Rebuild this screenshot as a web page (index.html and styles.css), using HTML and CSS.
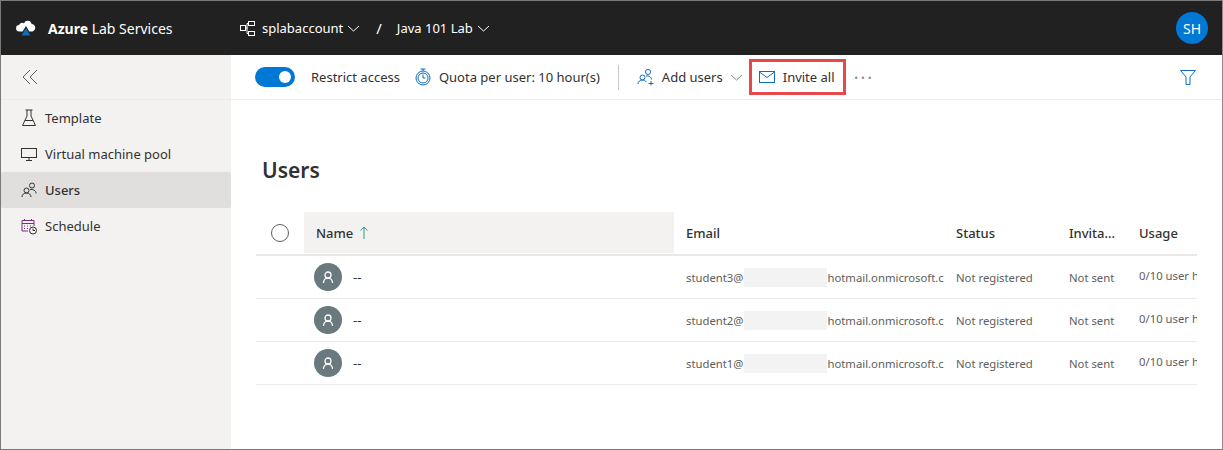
FILE: index.html
```html
<!DOCTYPE html>
<html lang="en">
<head>
  <meta charset="UTF-8">
  <title>Azure Lab Services</title>
  <link rel="stylesheet" href="styles.css">
</head>
<body>
  <div class="frame">
    <header class="topbar">
      <svg class="logo" width="20" height="16" viewBox="0 0 20 16">
        <path d="M3.500 11.500a3.200 3.200 0 0 1-.4-6.400A3.600 3.600 0 0 1 8 3.200 4 4 0 0 1 15.600 4a3.800 3.800 0 0 1 1 7.400l-3.300.1L10 6l-3.400 5.500z" fill="#fff"/>
        <path d="M10 8l4.400 7.500H5.600z" fill="#0f6cbd"/>
      </svg>
      <span class="brand"><b>Azure</b> Lab Services</span>
      <svg class="account-icon" width="15" height="15" viewBox="0 0 15 15" fill="none" stroke="#fff">
        <rect x="8.500" y=".5" width="6" height="4"/><rect x="8.500" y="10.500" width="6" height="4"/><rect x=".5" y="4.500" width="5" height="5"/>
        <path d="M5.500 7h2M7 2.500v10M7 2.500h1.500M7 12.500h1.500"/>
      </svg>
      <span class="crumb">splabaccount</span>
      <svg class="chev" width="13" height="7" viewBox="0 0 13 7" fill="none" stroke="#fff"><path d="M1 1l5.500 5L12 1"/></svg>
      <span class="slash">/</span>
      <span class="crumb">Java 101 Lab</span>
      <svg class="chev" width="13" height="7" viewBox="0 0 13 7" fill="none" stroke="#fff"><path d="M1 1l5.500 5L12 1"/></svg>
      <span class="avatar">SH</span>
    </header>

    <div class="main">
      <nav class="sidebar">
        <div class="collapse">
          <svg width="16" height="16" viewBox="0 0 16 16" fill="none" stroke="#5f5e5c"><path d="M8 1L1 8l7 7M15 1L8 8l7 7"/></svg>
        </div>
        <ul class="nav">
          <li class="nav-item">
            <svg width="16" height="18" viewBox="0 0 16 18" fill="none" stroke="#323130"><path d="M4.500 1h7M6 1v6L1.500 16.500h13L10 7V1M4 11.500h8"/></svg>
            Template
          </li>
          <li class="nav-item">
            <svg width="16" height="16" viewBox="0 0 16 16" fill="none" stroke="#323130"><rect x=".5" y="2.500" width="15" height="9"/><path d="M8 11.500v3M5 14.500h6"/></svg>
            Virtual machine pool
          </li>
          <li class="nav-item active">
            <svg width="16" height="16" viewBox="0 0 16 16" fill="none" stroke="#323130"><circle cx="5.500" cy="8.500" r="2.500"/><circle cx="11" cy="3.500" r="2.500"/><path d="M1 15c0-2.500 2-4 4.500-4s4.500 1.500 4.500 4M9 7.500c3-.5 6 1 6 4"/></svg>
            Users
          </li>
          <li class="nav-item">
            <svg width="16" height="17" viewBox="0 0 16 17" fill="none" stroke="#7a2a86"><path d="M1 2.500h12V8M1 2.500V13h6M1 5.500h12M3.500 1v2M10.500 1v2M3 8h1M6 8h1M9 8h1M3 10.500h1M6 10.500h1"/><circle cx="12" cy="12.500" r="3.500" stroke="#323130"/><path d="M12 10.500v2h2" stroke="#323130"/></svg>
            Schedule
          </li>
        </ul>
      </nav>

      <section class="content">
        <div class="toolbar">
          <span class="toggle"><span class="knob"></span></span>
          <span class="tool restrict">Restrict access</span>
          <svg class="tool-icon quota-icon" width="16" height="18" viewBox="0 0 16 18" fill="none" stroke="#0f6cbd"><circle cx="8" cy="10" r="7"/><circle cx="8" cy="10" r="5"/><path d="M5.500 1h5M8 1v2M8 6.500V10h2.500"/></svg>
          <span class="tool">Quota per user: 10 hour(s)</span>
          <span class="divider"></span>
          <svg class="tool-icon add-icon" width="18" height="18" viewBox="0 0 18 18" fill="none" stroke="#0f6cbd"><circle cx="5.500" cy="9.500" r="2.500"/><circle cx="11" cy="4" r="2.500"/><path d="M1 16c0-2.500 2-4 4.500-4 1.500 0 3 .7 3.700 2M9 8c3-.5 5.500 1 5.500 3.500M14 13v4.500M11.500 15.500h5"/></svg>
          <span class="tool">Add users</span>
          <svg class="add-chev" width="13" height="7" viewBox="0 0 13 7" fill="none" stroke="#8a8886"><path d="M1 1l5.500 5L12 1"/></svg>
          <button class="invite">
            <svg width="16" height="12" viewBox="0 0 16 12" fill="none" stroke="#0f6cbd"><rect x=".5" y=".5" width="15" height="11"/><path d="M.5 1L8 6.500 15.500 1"/></svg>
            Invite all
          </button>
          <span class="more">···</span>
          <svg class="filter" width="16" height="15" viewBox="0 0 16 15" fill="none" stroke="#0f6cbd"><path d="M.5.500h15L10 7v7.500H6V7z"/></svg>
        </div>

        <div class="page">
          <h1 class="title">Users</h1>
          <div class="table">
            <div class="row head">
              <div class="cell col-check"><span class="radio"></span></div>
              <div class="cell col-name sorted">Name
                <svg class="arrow" width="8" height="13" viewBox="0 0 8 13" fill="none" stroke="#2a9d8f"><path d="M4 13V1M.5 4.500L4 1l3.500 3.500"/></svg>
              </div>
              <div class="cell col-email">Email</div>
              <div class="cell col-status">Status</div>
              <div class="cell col-invite">Invita...</div>
              <div class="cell col-usage">Usage</div>
            </div>
            <div class="row">
              <div class="cell col-check"></div>
              <div class="cell col-name">
                <span class="person"><svg width="12" height="13" viewBox="0 0 12 13" fill="none" stroke="#fff" stroke-width="1.300"><circle cx="6" cy="4" r="3"/><path d="M1.500 12c0-3 2-5 4.500-5s4.500 2 4.500 5"/></svg></span>
                --
              </div>
              <div class="cell col-email">student3@<span class="blur"></span>hotmail.onmicrosoft.com</div>
              <div class="cell col-status">Not registered</div>
              <div class="cell col-invite">Not sent</div>
              <div class="cell col-usage"><span class="usage-text">0/10 user hours</span></div>
            </div>
            <div class="row">
              <div class="cell col-check"></div>
              <div class="cell col-name">
                <span class="person"><svg width="12" height="13" viewBox="0 0 12 13" fill="none" stroke="#fff" stroke-width="1.300"><circle cx="6" cy="4" r="3"/><path d="M1.500 12c0-3 2-5 4.500-5s4.500 2 4.500 5"/></svg></span>
                --
              </div>
              <div class="cell col-email">student2@<span class="blur"></span>hotmail.onmicrosoft.com</div>
              <div class="cell col-status">Not registered</div>
              <div class="cell col-invite">Not sent</div>
              <div class="cell col-usage"><span class="usage-text">0/10 user hours</span></div>
            </div>
            <div class="row">
              <div class="cell col-check"></div>
              <div class="cell col-name">
                <span class="person"><svg width="12" height="13" viewBox="0 0 12 13" fill="none" stroke="#fff" stroke-width="1.300"><circle cx="6" cy="4" r="3"/><path d="M1.500 12c0-3 2-5 4.500-5s4.500 2 4.500 5"/></svg></span>
                --
              </div>
              <div class="cell col-email">student1@<span class="blur"></span>hotmail.onmicrosoft.com</div>
              <div class="cell col-status">Not registered</div>
              <div class="cell col-invite">Not sent</div>
              <div class="cell col-usage"><span class="usage-text">0/10 user hours</span></div>
            </div>
          </div>
        </div>
      </section>
    </div>
  </div>
</body>
</html>
```

FILE: styles.css
```css
* {
  box-sizing: border-box;
}

body {
  margin: 0;
  font-family: "Noto Sans", Arial, sans-serif;
  font-size: 13px;
  color: #323130;
  background: #fff;
}

.frame {
  width: 1223px;
  height: 450px;
  border: 1px solid #7a7a7a;
  border-right-color: #8a8a8a;
  display: flex;
  flex-direction: column;
  overflow: hidden;
}

/* top bar */
.topbar {
  height: 54px;
  flex: none;
  background: #212121;
  color: #fff;
  display: flex;
  align-items: center;
  padding: 0 14px 0 15px;
  font-size: 13px;
}

.logo {
  flex: none;
}

.brand {
  margin-left: 12px;
  width: 192px;
  font-size: 14px;
  white-space: nowrap;
}

.account-icon {
  flex: none;
  margin-right: 7px;
}

.crumb {
  white-space: nowrap;
}

.chev {
  margin-left: 4px;
  flex: none;
}

.slash {
  margin: 0 15px 0 16px;
  font-size: 15px;
}

.avatar {
  margin-left: auto;
  width: 32px;
  height: 32px;
  border-radius: 50%;
  background: #0078d4;
  display: flex;
  align-items: center;
  justify-content: center;
  font-size: 14px;
}

.main {
  flex: 1;
  display: flex;
  min-height: 0;
}

/* sidebar */
.sidebar {
  width: 230px;
  flex: none;
  background: #f3f2f1;
}

.collapse {
  height: 45px;
  display: flex;
  align-items: center;
  padding-left: 21px;
  border-bottom: 1px solid #edebe9;
}

.nav {
  list-style: none;
  margin: 0;
  padding: 0;
}

.nav-item {
  height: 36px;
  display: flex;
  align-items: center;
  padding-left: 20px;
  gap: 8px;
  white-space: nowrap;
}

.nav-item svg {
  flex: none;
}

.nav-item.active {
  background: #e1dfdd;
  border-radius: 2px;
  font-weight: 500;
}

/* toolbar */
.content {
  flex: 1;
  min-width: 0;
}

.toolbar {
  height: 45px;
  display: flex;
  align-items: center;
  padding: 0 26px 0 24px;
  border-bottom: 1px solid #edebe9;
}

.toggle {
  width: 40px;
  height: 20px;
  border-radius: 10px;
  background: #0078d4;
  display: flex;
  align-items: center;
  justify-content: flex-end;
  padding-right: 4px;
  flex: none;
}

.knob {
  width: 12px;
  height: 12px;
  border-radius: 50%;
  background: #fff;
}

.tool {
  white-space: nowrap;
}

.restrict {
  margin-left: 16px;
}

.tool-icon {
  flex: none;
}

.quota-icon {
  margin: 0 8px 0 15px;
}

.divider {
  width: 1px;
  height: 25px;
  background: #c8c6c4;
  margin: 0 18px;
  flex: none;
}

.add-icon {
  margin-right: 7px;
}

.add-chev {
  margin-left: 7px;
  flex: none;
}

.invite {
  margin-left: 6px;
  height: 36px;
  width: 97px;
  border: 3px solid #e8484a;
  background: #fff;
  display: flex;
  align-items: center;
  gap: 8px;
  padding: 0 0 0 7px;
  font: inherit;
  color: inherit;
  white-space: nowrap;
}

.more {
  margin-left: 8px;
  font-size: 18px;
  letter-spacing: 2px;
  color: #8a8886;
}

.filter {
  margin-left: auto;
  flex: none;
}

/* users table */
.page {
  padding: 54px 25px 0 25px;
}

.title {
  margin: 0 0 26px 6px;
  font-size: 21px;
  line-height: 32px;
  font-weight: 600;
}

.row {
  display: flex;
  height: 43px;
  align-items: center;
  border-bottom: 1px solid #edebe9;
}

.row.head {
  height: 44px;
  font-weight: 500;
  align-items: stretch;
  border-bottom-width: 2px;
  border-bottom-color: #e9e8e7;
}

.cell {
  padding-left: 12px;
  white-space: nowrap;
  overflow: hidden;
  flex: none;
  display: flex;
  align-items: center;
  font-size: 11.3px;
  color: #605e5c;
}

.head .cell {
  font-size: 13px;
  color: #323130;
}

.col-check {
  width: 48px;
  padding-left: 15px;
}

.col-name {
  width: 370px;
  padding-left: 10px;
}

.head .col-name {
  padding-left: 12px;
}

.col-email {
  width: 270px;
}

.col-status {
  width: 113px;
}

.col-invite {
  width: 70px;
}

.col-usage {
  width: 70px;
}

.sorted {
  background: #f3f2f1;
  margin-bottom: 1px;
}

.arrow {
  margin-left: 7px;
  flex: none;
}

.radio {
  width: 18px;
  height: 18px;
  border-radius: 50%;
  border: 1px solid #605e5c;
  background: #fff;
}

.person {
  width: 28px;
  height: 28px;
  border-radius: 50%;
  background: #69797e;
  display: flex;
  align-items: center;
  justify-content: center;
  margin-right: 11px;
  flex: none;
}

.col-name:not(.sorted) {
  color: #323130;
  font-size: 13px;
}

.blur {
  display: inline-block;
  width: 83px;
  height: 19px;
  margin-left: 1px;
  background: #f3f3f3;
  flex: none;
}

.usage-text {
  margin-top: -4px;
}
```
